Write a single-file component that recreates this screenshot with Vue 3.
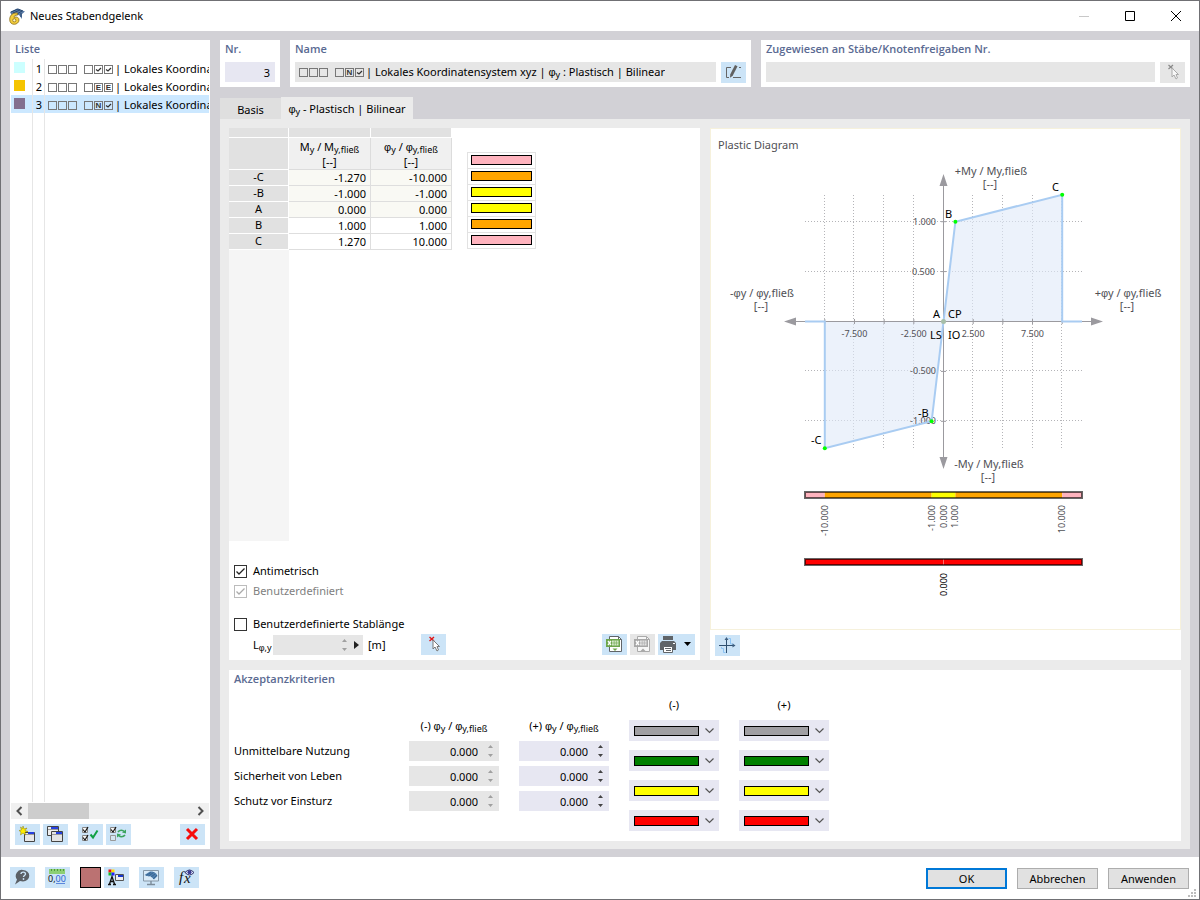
<script setup>
import { ref } from 'vue'

const hinges = [
  { no: 1, color: '#ccffff', marks: ['check', 'check'] },
  { no: 2, color: '#f5c400', marks: ['E', 'E'] },
  { no: 3, color: '#836f8f', marks: ['N', 'check'] },
]
const selected = ref(3)

const points = [
  { name: '-C', m: '-1.270', phi: '-10.000', locked: true },
  { name: '-B', m: '-1.000', phi: '-1.000', locked: true },
  { name: 'A', m: '0.000', phi: '0.000', locked: true },
  { name: 'B', m: '1.000', phi: '1.000', locked: false },
  { name: 'C', m: '1.270', phi: '10.000', locked: false },
]
const zoneColors = ['#ffb3be', '#ffa500', '#ffff00', '#ffff00', '#ffa500', '#ffb3be']

const criteria = ['Unmittelbare Nutzung', 'Sicherheit von Leben', 'Schutz vor Einsturz']
const levels = ['#a09fa3', '#008000', '#ffff00', '#ff0000']

const antimetric = ref(true)
const customLength = ref(false)

const px = (v) => 233.5 + v * 11.87
const py = (v) => 193.5 - v * 99.8
const gridX = [-10, -7.5, -5, -2.5, 2.5, 5, 7.5, 10]
const gridY = [1, 0.5, -0.5, -1]
const poly = (list) => list.map(([x, y]) => `${px(x)},${py(y)}`).join(' ')
const upper = poly([[0, 0], [1, 1], [10, 1.27], [10, 0]])
const lower = poly([[0, 0], [-1, -1], [-10, -1.27], [-10, 0]])
const nodes = [[1, 1], [10, 1.27], [-1, -1], [-10, -1.27]]
const rangeTicks = [
  { v: -10, t: '-10.000' },
  { v: -1, t: '-1.000' },
  { v: 0, t: '0.000' },
  { v: 1, t: '1.000' },
  { v: 10, t: '10.000' },
]
const zones = [
  { from: 95, to: px(-10), color: '#ffb3be' },
  { from: px(-10), to: px(-1), color: '#ffa500' },
  { from: px(-1), to: px(1), color: '#ffff00' },
  { from: px(1), to: px(10), color: '#ffa500' },
  { from: px(10), to: 372, color: '#ffb3be' },
]
</script>

<template>
  <div class="window">
    <header class="titlebar">
      <svg class="app-icon" width="16" height="17" viewBox="0 0 16 17" aria-hidden="true">
        <path d="M1 4 8 .5l8 3-3 2.500v5l-3-4-7 1z" fill="#5b7ba6" />
        <path d="M2 4 9 1l5 2M4 5l7-3M8 6l5-3M12 5v4" stroke="#27476f" fill="none" />
        <path d="M8.500 5C3 4.500.7 8 .7 11.500S3 16.300 5.300 16.300 10 14.500 10 12 8 8.300 5 9.300C5.300 7.500 6.500 6.800 8.500 7z" fill="#f3cd3c" stroke="#8c6f1d" stroke-width=".8" />
        <circle cx="5.300" cy="12.300" r="1.600" fill="#fff6c4" stroke="#8c6f1d" stroke-width=".8" />
      </svg>
      <h1>Neues Stabendgelenk</h1>
      <div class="win-buttons">
        <button type="button" disabled aria-label="Minimieren"><svg width="12" height="12"><path d="M1 6.500h10" stroke="#c8c8c8" /></svg></button>
        <button type="button" aria-label="Maximieren"><svg width="12" height="12"><path d="M1.500 1.500h9v9h-9z" stroke="#000" fill="none" /></svg></button>
        <button type="button" aria-label="Schließen"><svg width="12" height="12"><path d="M1 1l10 10M11 1 1 11" stroke="#000" fill="none" /></svg></button>
      </div>
    </header>

    <main class="body">
      <aside class="panel list-panel">
        <h2>Liste</h2>
        <ul class="list">
          <li v-for="h in hinges" :key="h.no" :class="{ active: h.no === selected }" @click="selected = h.no">
            <i class="chip" :style="{ background: h.color }"></i>
            <span class="no">{{ h.no }}</span>
            <span class="label">
              <span class="boxes"><i></i><i></i><i></i></span>
              <span class="boxes second"><i></i>
                <i v-for="(m, k) in h.marks" :key="k" class="mark">
                  <svg v-if="m === 'check'" width="7" height="7" viewBox="0 0 7 7"><path d="M1 3.500 3 5l3-3" fill="none" stroke="#333" stroke-width="1.300" /></svg>
                  <template v-else>{{ m }}</template>
                </i>
              </span>
              <span class="desc">| Lokales Koordinatensystem xyz</span>
            </span>
          </li>
          <li class="rest" aria-hidden="true"></li>
        </ul>
        <div class="hscroll">
          <button type="button" aria-label="Nach links"><svg width="17" height="16"><path d="M10.500 4 6.500 8l4 4" fill="none" stroke="#505050" stroke-width="2" /></svg></button>
          <div class="track"><div class="thumb"></div></div>
          <button type="button" aria-label="Nach rechts"><svg width="17" height="16"><path d="M6.500 4l4 4-4 4" fill="none" stroke="#505050" stroke-width="2" /></svg></button>
        </div>
        <div class="list-tools">
          <button type="button" class="tool" aria-label="Neu">
            <svg width="25" height="21" viewBox="0 0 25 21">
              <path d="M9.500 8.500h10v9h-10z" fill="#e8e8e8" stroke="#444" /><path d="M13 8h6v2h-6z" fill="#2540e0" /><path d="M10 10.500h9" stroke="#999" />
              <path d="M8 2l1 3 3-1-2 2.500 3 1-3 .5.500 3-2.500-2-2.500 2 .5-3-2-1.500 2.500-.5-1-3 2 1.500z" fill="#ffee00" stroke="#8a7a00" stroke-width=".5" />
            </svg>
          </button>
          <button type="button" class="tool" aria-label="Kopieren">
            <svg width="25" height="21" viewBox="0 0 25 21">
              <path d="M4.500 2.500h11v9h-11z" fill="#eee" stroke="#444" /><path d="M8 3h7v2H8z" fill="#2540e0" /><path d="M5 5.500h10" stroke="#999" />
              <path d="M8.500 7.500h11v10h-11z" fill="#e4e4e4" stroke="#444" /><path d="M13 8h6v2h-6z" fill="#2540e0" /><path d="M9 10.500h10" stroke="#999" />
            </svg>
          </button>
          <button type="button" class="tool gap" aria-label="Alle auswählen">
            <svg width="25" height="21" viewBox="0 0 25 21">
              <path d="M4.500 3.500h5v5h-5zM4.500 11.500h5v5h-5z" fill="#f5f5f5" stroke="#888" />
              <path d="M5 5.500 7 8l3-5M5 13.500 7 16l3-5" fill="none" stroke="#111" stroke-width="1.200" />
              <path d="M12.500 10.500 15 13.500 19.500 6.500" fill="none" stroke="#11a044" stroke-width="2" />
            </svg>
          </button>
          <button type="button" class="tool" aria-label="Auswahl umkehren">
            <svg width="25" height="21" viewBox="0 0 25 21">
              <path d="M4.500 3.500h5v5h-5z" fill="#f5f5f5" stroke="#888" /><path d="M4.500 11.500h5v5h-5z" fill="#d5e5f2" stroke="#999" />
              <path d="M5 5.500 7 8l3-5" fill="none" stroke="#111" stroke-width="1.200" />
              <path d="M12 8c2-2.500 5-2 6-.5M19 11c-2 2.500-5 2-6 .5" fill="none" stroke="#3ba45e" stroke-width="1.700" /><path d="M20 5.500v4l-4-1zM11 13.500v-4l4 1z" fill="#3ba45e" />
            </svg>
          </button>
          <button type="button" class="tool push" aria-label="Löschen">
            <svg width="25" height="21" viewBox="0 0 25 21"><path d="M7 5l10 10M17 5l-10 10" stroke="#f60c0c" stroke-width="3" /></svg>
          </button>
        </div>
      </aside>

      <section class="main">
        <div class="top-row">
          <div class="panel field-panel">
            <h2><label for="no">Nr.</label></h2>
            <div class="line"><input id="no" class="field num" value="3" /></div>
          </div>
          <div class="panel field-panel">
            <h2>Name</h2>
            <div class="line">
              <div class="field readonly" role="textbox" aria-readonly="true" aria-label="Name">
                <span class="boxes"><i></i><i></i><i></i></span>
                <span class="boxes second"><i></i><i class="mark">N</i><i class="mark"><svg width="7" height="7" viewBox="0 0 7 7"><path d="M1 3.500 3 5l3-3" fill="none" stroke="#333" stroke-width="1.300" /></svg></i></span>
                <span class="desc">| Lokales Koordinatensystem xyz | <span class="phi">φ</span><sub>y</sub> : Plastisch | Bilinear</span>
              </div>
              <button type="button" class="tool" aria-label="Name bearbeiten">
                <svg width="25" height="21" viewBox="0 0 25 21">
                  <path d="M10 5.500H5.500v10H8M12 15.500h8M18 5.500h2" fill="none" stroke="#666" />
                  <path d="M14 3l2.500 1.200-4.800 9.500-2.700 2 .3-3.400z" fill="#606060" />
                </svg>
              </button>
            </div>
          </div>
          <div class="panel field-panel">
            <h2><label for="assigned">Zugewiesen an Stäbe/Knotenfreigaben Nr.</label></h2>
            <div class="line">
              <input id="assigned" class="field disabled" readonly />
              <button type="button" class="tool off" disabled aria-label="Stäbe auswählen">
                <svg width="25" height="21" viewBox="0 0 25 21">
                  <path d="M8.500 3l4.500 4M13 3 8.500 7" stroke="#888" stroke-width="1.200" />
                  <path d="M12 6v9l2-2 2 4 1.500-1-1.500-3.500h2.500z" fill="#f8f8f8" stroke="#aaa" />
                </svg>
              </button>
            </div>
          </div>
        </div>

        <nav class="tabs">
          <button type="button" class="tab">Basis</button>
          <button type="button" class="tab current"><span class="phi">φ</span><sub>y</sub> - Plastisch | Bilinear</button>
        </nav>

        <div class="content">
          <div class="cards">
            <div class="card data-card">
              <div class="tables">
                <table>
                  <thead>
                    <tr class="band"><td></td><td></td><td></td></tr>
                    <tr>
                      <td class="corner"></td>
                      <th scope="col">M<sub>y</sub> / M<sub>y,fließ</sub><br />[--]</th>
                      <th scope="col"><span class="phi">φ</span><sub>y</sub> / <span class="phi">φ</span><sub>y,fließ</sub><br />[--]</th>
                    </tr>
                  </thead>
                  <tbody>
                    <tr v-for="p in points" :key="p.name" :class="{ locked: p.locked }">
                      <th scope="row">{{ p.name }}</th>
                      <td>{{ p.m }}</td>
                      <td>{{ p.phi }}</td>
                    </tr>
                  </tbody>
                </table>
                <ul class="zones">
                  <li v-for="(c, k) in zoneColors" :key="k"><i :style="{ background: c }"></i></li>
                </ul>
              </div>
              <div class="options">
                <label class="check"><input v-model="antimetric" type="checkbox" />Antimetrisch</label>
                <label class="check dim"><input type="checkbox" checked disabled />Benutzerdefiniert</label>
                <label class="check spaced"><input v-model="customLength" type="checkbox" />Benutzerdefinierte Stablänge</label>
                <div class="length-row">
                  <label for="len">L<sub><span class="phi">φ</span>,y</sub></label>
                  <div class="spin disabled length">
                    <input id="len" disabled />
                    <svg class="arrows" width="5" height="12" viewBox="0 0 5 12"><path d="M0 3h5L2.500 0zM0 9h5l-2.500 3z" fill="#a0a0a0" /></svg>
                    <svg class="more" width="5" height="8" viewBox="0 0 5 8"><path d="M0 0l5 4-5 4z" fill="#222" /></svg>
                  </div>
                  <span class="unit">[m]</span>
                  <button type="button" class="tool pick" aria-label="Stab auswählen">
                    <svg width="25" height="21" viewBox="0 0 25 21">
                      <path d="M8.500 3l4.500 4M13 3 8.500 7" stroke="#e01818" stroke-width="1.400" />
                      <path d="M12 6v9l2-2 2 4 1.500-1-1.500-3.500h2.500z" fill="#fff" stroke="#777" />
                    </svg>
                  </button>
                  <button type="button" class="tool first-right" aria-label="Excel-Export">
                    <svg width="25" height="21" viewBox="0 0 25 21">
                      <path d="M7.500 2.500h9l3 3v12h-12z" fill="#fff" stroke="#606468" /><path d="M16.500 2.500v3h3" fill="none" stroke="#606468" />
                      <path d="M4 5h14v8H4z" fill="#6da64c" /><path d="M6 7l3 4M9 7l-3 4" stroke="#fff" stroke-width="1.300" />
                      <path d="M10 6.500h6.500v5H10z" fill="#d5e8ca" /><path d="M10 9h6.500M12.200 6.500v5M14.400 6.500v5" stroke="#6da64c" stroke-width=".6" />
                      <path d="M10.500 14.500h5L13 17z" fill="#6da64c" />
                    </svg>
                  </button>
                  <button type="button" class="tool off" disabled aria-label="Excel-Import">
                    <svg width="25" height="21" viewBox="0 0 25 21">
                      <path d="M7.500 2.500h9l3 3v12h-12z" fill="#f7f7f7" stroke="#aaa" /><path d="M16.500 2.500v3h3" fill="none" stroke="#aaa" />
                      <path d="M4 5h14v8H4z" fill="#a8a8a8" /><path d="M6 7l3 4M9 7l-3 4" stroke="#fff" stroke-width="1.300" />
                      <path d="M10 6.500h6.500v5H10z" fill="#e2e2e2" /><path d="M10 9h6.500M12.200 6.500v5M14.400 6.500v5" stroke="#a8a8a8" stroke-width=".6" />
                      <path d="M10.500 17h5L13 14.500z" fill="#a8a8a8" />
                    </svg>
                  </button>
                  <button type="button" class="tool wide" aria-label="Drucken">
                    <svg width="37" height="21" viewBox="0 0 37 21">
                      <path d="M5 2h10v4H5zM2 9l2-2h12l2 2v7H2z" fill="#606468" /><path d="M15 9h2v1h-2z" fill="#fff" />
                      <path d="M5.500 12.500h9v6h-9z" fill="#fff" stroke="#606468" /><path d="M7 14.500h6M8 16.500h5" stroke="#606468" />
                      <path d="M26 8h7l-3.500 4z" fill="#000" />
                    </svg>
                  </button>
                </div>
              </div>
            </div>

            <div class="card plot-card">
              <svg class="plot" viewBox="0 0 471 502" role="img" aria-label="Plastic Diagram">
                <text x="8" y="21" class="axis-title">Plastic Diagram</text>
                <g class="grid">
                  <path v-for="x in gridX" :key="'x' + x" :d="`M${Math.round(px(x)) - 0.5} 67V320`" />
                  <path v-for="y in gridY" :key="'y' + y" :d="`M95 ${Math.round(py(y)) - 0.5}H372`" />
                </g>
                <polygon :points="upper" class="area" />
                <polygon :points="lower" class="area" />
                <g class="ticks">
                  <text x="226" :y="py(1) + 3" text-anchor="end">1.000</text>
                  <text x="225" :y="py(0.5) + 3" text-anchor="end">0.500</text>
                  <text x="226" :y="py(-0.5) + 3" text-anchor="end">-0.500</text>
                  <text x="226" :y="py(-1) + 3" text-anchor="end">-1.000</text>
                  <text :x="px(-7.5)" y="209" text-anchor="middle">-7.500</text>
                  <text :x="px(-2.5)" y="209" text-anchor="middle">-2.500</text>
                  <text :x="px(2.5)" y="209" text-anchor="middle">2.500</text>
                  <text :x="px(7.5)" y="209" text-anchor="middle">7.500</text>
                </g>
                <g class="axes">
                  <path d="M84 193.500H384M233.500 56V331" />
                  <path v-for="x in gridX" :key="'t' + x" :d="`M${px(x)} 191V196`" />
                  <path v-for="y in gridY" :key="'u' + y" :d="`M231 ${py(y)}H236`" />
                </g>
                <path class="heads" d="M74 193.500l12-4v8zM393 193.500l-12-4v8zM233.500 46l-4 12h8zM233.500 341l-4-12h8z" />
                <path class="curve" :d="`M95 ${py(0)}H${px(-10)}V${py(-1.27)}L${px(-1)} ${py(-1)}L${px(1)} ${py(1)}L${px(10)} ${py(1.27)}V${py(0)}H372`" />
                <circle v-for="(n, k) in nodes" :key="k" :cx="px(n[0])" :cy="py(n[1])" r="2" fill="#0f0" />
                <circle cx="233.500" cy="193.500" r="2.500" fill="#a7bfa9" />
                <g class="axis-title" text-anchor="middle">
                  <text x="281" y="47">+My / My,fließ</text><text x="280" y="60">[--]</text>
                  <text x="279" y="340">-My / My,fließ</text><text x="278" y="353">[--]</text>
                  <text x="52" y="169">-<tspan class="phi">φ</tspan>y / <tspan class="phi">φ</tspan>y,fließ</text><text x="51" y="182">[--]</text>
                  <text x="418" y="169">+<tspan class="phi">φ</tspan>y / <tspan class="phi">φ</tspan>y,fließ</text><text x="417" y="182">[--]</text>
                </g>
                <g class="names">
                  <text x="235" y="90">B</text><text x="342" y="63">C</text>
                  <text x="223" y="190">A</text><text x="238" y="190">CP</text>
                  <text x="220" y="211">LS</text><text x="238" y="211">IO</text>
                  <text x="208" y="289">-B</text><text x="101" y="316">-C</text>
                </g>
                <rect v-for="z in zones" :key="z.from" :x="z.from" y="364" :width="z.to - z.from" height="6" :fill="z.color" />
                <rect x="95" y="364" width="277" height="6" class="frame" />
                <g class="ticks" text-anchor="end">
                  <text v-for="r in rangeTicks" :key="r.t" :transform="`translate(${px(r.v) + 3} 377) rotate(-90)`">{{ r.t }}</text>
                </g>
                <rect x="95" y="431" width="277" height="6" fill="#f00" />
                <path d="M233.500 431v6" stroke="#ff6a6a" />
                <rect x="95" y="431" width="277" height="6" class="frame" />
                <text class="ticks strong" text-anchor="end" transform="translate(237 445) rotate(-90)">0.000</text>
              </svg>
              <div class="plot-tools">
                <button type="button" class="tool" aria-label="Diagrammansicht">
                  <svg width="25" height="21" viewBox="0 0 25 21">
                    <path d="M6.500 12v1.500h2v4h2M13.500 3.500h2v5.500h3" fill="none" stroke="#8cc4f4" />
                    <path d="M4 10.500h16M11.500 3v15" stroke="#2f5070" /><path d="M20.500 10.500l-3-2v4zM11.500 2l-2 3h4z" fill="#3f5f80" />
                  </svg>
                </button>
              </div>
            </div>
          </div>

          <div class="card accept">
            <h2>Akzeptanzkriterien</h2>
            <div class="accept-body">
              <div class="limits">
                <span></span>
                <span class="col">(-) <span class="phi">φ</span><sub>y</sub> / <span class="phi">φ</span><sub>y,fließ</sub></span>
                <span class="col">(+) <span class="phi">φ</span><sub>y</sub> / <span class="phi">φ</span><sub>y,fließ</sub></span>
                <template v-for="(c, k) in criteria" :key="c">
                  <label :for="'neg' + k">{{ c }}</label>
                  <div class="spin disabled">
                    <input :id="'neg' + k" value="0.000" disabled />
                    <svg class="arrows" width="5" height="12" viewBox="0 0 5 12"><path d="M0 3h5L2.500 0zM0 9h5l-2.500 3z" fill="#a0a0a0" /></svg>
                  </div>
                  <div class="spin">
                    <input :id="'pos' + k" value="0.000" :aria-label="c + ' (+)'" />
                    <svg class="arrows" width="5" height="12" viewBox="0 0 5 12"><path d="M0 3h5L2.500 0zM0 9h5l-2.500 3z" fill="#444" /></svg>
                  </div>
                </template>
              </div>
              <div class="colors">
                <span class="col">(-)</span>
                <span class="col">(+)</span>
                <template v-for="(c, k) in levels" :key="c">
                  <div v-for="s in ['-', '+']" :key="s" class="combo">
                    <select :aria-label="`Farbe ${k + 1} (${s})`"><option :value="c"></option></select>
                    <i :style="{ background: c }"></i>
                    <svg width="9" height="6" viewBox="0 0 9 6"><path d="M.5.5l4 4 4-4" fill="none" stroke="#555" stroke-width="1.200" /></svg>
                  </div>
                </template>
              </div>
            </div>
          </div>
        </div>
      </section>
    </main>

    <footer class="footer">
      <button type="button" class="tool" aria-label="Hilfe">
        <svg width="25" height="21" viewBox="0 0 25 21">
          <path d="M13 3a6 5.500 0 0 1 0 11.500c-1 0-2-.2-3-.5l-5 3.500 2-5A6 6 0 0 1 13 3z" fill="#5b6066" />
          <path d="M11 7c0-2.500 4.500-2.500 4.500 0 0 1.500-2 1.500-2 3" fill="none" stroke="#cce4f7" stroke-width="1.400" /><circle cx="13.500" cy="12" r=".9" fill="#cce4f7" />
        </svg>
      </button>
      <button type="button" class="tool g10" aria-label="Einheiten">
        <svg width="25" height="21" viewBox="0 0 25 21">
          <path d="M4 2h16v5H4z" fill="#8ccf74" /><path d="M6.500 2v2M9.500 2v2M12.500 2v2M15.500 2v2M18.500 2v2" stroke="#4f9b3a" />
          <text x="3" y="15" font-size="9" fill="#111">0,</text><text x="10.500" y="15" font-size="9" fill="#2b62d0">00</text><path d="M11 16.500h9" stroke="#5b87dd" />
        </svg>
      </button>
      <button type="button" class="color-button g10" aria-label="Farbe"></button>
      <button type="button" class="tool g3" aria-label="Darstellung">
        <svg width="25" height="21" viewBox="0 0 25 21">
          <path d="M4.500 2.500h3v3h-3z" fill="#e11" /><path d="M7.500 2.500h3v3h-3z" fill="#fd0" /><path d="M4.500 5.500h3v3h-3z" fill="#1b2" /><path d="M7.500 5.500h3v3h-3z" fill="#22f" />
          <path d="M4 17.500h3M9 17.500h3M5.500 17 8 9.500l2.500 7.500M6.500 14.500h3" fill="none" stroke="#111" stroke-width="1.300" />
          <path d="M11.500 7.500h8v6h-8z" fill="#eee" stroke="#555" /><path d="M14 8h5v2h-5z" fill="#1638d0" />
        </svg>
      </button>
      <button type="button" class="tool g10" aria-label="Ansicht">
        <svg width="25" height="21" viewBox="0 0 25 21">
          <path d="M4.500 3.500h15v10.500h-15z" fill="#d9eaf7" stroke="#8496a6" /><path d="M12 14v3M8 17.500h8" stroke="#7c8c9a" stroke-width="1.400" />
          <path d="M5.500 8 11 4.500c4-.5 7 2 7.500 4.500L15 12.500 12 9.500 8 9z" fill="#4f7fae" /><path d="M7 8.500l5-3M9.500 9l5-3.500M12 10l4-3M14 12l4-4" stroke="#27527e" stroke-width=".6" />
        </svg>
      </button>
      <button type="button" class="tool g10" aria-label="Formel">
        <svg width="25" height="21" viewBox="0 0 25 21">
          <text x="5" y="15" class="formula">f</text>
          <text x="10" y="16" class="formula">x</text>
          <path d="M11 5.500q4.500-5 9 0-4.500 5-9 0z" fill="#dfe6ff" stroke="#2c2f66" /><circle cx="15.500" cy="5.300" r="2" fill="#3a3a90" />
        </svg>
      </button>
      <div class="actions">
        <button type="button" class="action primary">OK</button>
        <button type="button" class="action">Abbrechen</button>
        <button type="button" class="action">Anwenden</button>
      </div>
      <svg class="grip" width="9" height="9" viewBox="0 0 9 9" aria-hidden="true"><path d="M6 0h2v2H6zM3 3h2v2H3zM6 3h2v2H6zM0 6h2v2H0zM3 6h2v2H3zM6 6h2v2H6z" fill="#bdbdbd" /></svg>
    </footer>
  </div>
</template>

<style>
body { margin: 0; background: #fff; }
</style>

<style scoped>
* { box-sizing: border-box; }
.window {
  display: flex; flex-direction: column; min-height: 100vh; border: 1px solid #707074;
  background: #fff; color: #000; font: 11px/16px "Noto Sans", "Open Sans", sans-serif;
}
button, input, select { font: inherit; color: inherit; border: 0; padding: 0; margin: 0; border-radius: 0; }
button { background: none; }
svg { display: block; }
ul { list-style: none; margin: 0; padding: 0; }
sub { font-size: 9px; line-height: 0; vertical-align: -2px; }
h1 { margin: 0; font-size: 11px; font-weight: 400; }
h2 { margin: 0; padding: 0 5px 2px; font: 600 11px/17px "Open Sans", "Noto Sans", sans-serif; color: #5a6a92; }
i { font-style: normal; }
.phi, .plot .phi { font-family: "Liberation Sans", sans-serif; line-height: 0; }

.titlebar { display: flex; align-items: center; height: 30px; padding-left: 8px; gap: 5px; }
.win-buttons { display: flex; margin-left: auto; }
.win-buttons button { width: 46px; height: 28px; display: flex; align-items: center; justify-content: center; }

.body { flex: 1; display: flex; gap: 10px; padding: 9px 9px 8px; background: #d2d1d6; }
.panel { background: #fff; }
.list-panel { width: 200px; flex: none; display: flex; flex-direction: column; }
.list { flex: 1; display: flex; flex-direction: column; margin: 0 1px; overflow: hidden; }
.list li { display: flex; height: 18px; line-height: 20px; align-items: stretch; white-space: nowrap; flex: none; }
.list li.rest { flex: 1; background: linear-gradient(#e6e6e6, #e6e6e6) 21px 0 / 1px 100% no-repeat, linear-gradient(#e6e6e6, #e6e6e6) 33px 0 / 1px 100% no-repeat; }
.list li.active { background: #cce8ff; }
.chip { width: 11px; height: 11px; margin: 3px 7px 0 3px; flex: none; }
.no { width: 13px; padding-right: 2px; text-align: right; border: solid #e6e6e6; border-width: 0 1px; flex: none; }
.label { display: flex; flex: 1; min-width: 0; align-items: center; padding: 2px 0 0 3px; }
.boxes { display: flex; gap: 1px; flex: none; }
.boxes.second { margin-left: 7px; }
.boxes i { width: 9px; height: 9px; border: 1px solid #777; display: flex; align-items: center; justify-content: center; font: 700 8px/7px "Liberation Sans", sans-serif; color: #333; }
.desc { min-width: 0; margin-left: 2px; white-space: nowrap; overflow: hidden; }

.hscroll { display: flex; height: 16px; margin: 1px 1px 5px; background: #f0f0f0; }
.hscroll button { width: 17px; height: 16px; }
.track { flex: 1; }
.thumb { width: 37%; height: 16px; background: #cdcdcd; }
.list-tools { display: flex; gap: 3px; padding: 0 5px 4px; }
.tool { width: 25px; height: 21px; background: #cce4f7; flex: none; }
.tool.off { background: #e6e6e6; }
.tool.wide { width: 37px; }
.tool.gap { margin-left: 7px; }
.push { margin-left: auto; }

.main { flex: 1; min-width: 0; display: flex; flex-direction: column; }
.top-row { display: grid; grid-template-columns: 60px minmax(0, 461fr) minmax(0, 429fr); gap: 10px; margin-bottom: 10px; }
.field-panel { height: 47px; }
.line { display: flex; gap: 5px; padding: 3px 5px 0; }
.field { flex: 1; min-width: 0; height: 20px; background: #e7e7f2; }
.field.num { text-align: right; padding-right: 5px; }
.field.disabled { background: #e6e6e6; }
.field.readonly { display: flex; align-items: center; padding-left: 4px; background: #e6e6e6; overflow: hidden; }

.tabs { display: flex; align-items: flex-end; height: 22px; }
.tab { height: 21px; width: 61px; background: #dfdfdf; padding-top: 2px; }
.tab.current { height: 22px; width: 132px; background: #ebebeb; padding-top: 2px; }
.content { flex: 1; display: flex; flex-direction: column; gap: 10px; padding: 9px 9px 8px; background: #ebebeb; }
.cards { flex: 1; display: grid; grid-template-columns: minmax(0, 1fr) minmax(0, 1fr); gap: 10px; }
.card { background: #fff; display: flex; flex-direction: column; }

.tables { flex: 1; display: flex; align-items: flex-start; background: linear-gradient(90deg, #f5f5f5 60px, transparent 60px); }
table { width: 223px; border-collapse: separate; border-spacing: 0; table-layout: fixed; background: #fff; }
.band td { height: 10px; border-bottom: 1px solid #fff; border-right: 1px solid #fff; background: #e1e1e1; padding: 0; }
thead td, thead th { padding: 0; }
.corner { background: #e1e1e1; border: solid #fff; border-width: 0 1px 1px 0; width: 60px; }
thead th { height: 32px; font-weight: 400; line-height: 15px; background: #f0f0f0; border: solid #dcdcdc; border-width: 0 1px 1px 0; }
tbody th { width: 60px; height: 16px; padding: 0 0 1px; line-height: 14px; font-weight: 400; background: #e1e1e1; border: solid #fff; border-width: 0 1px 1px 0; }
tbody td { height: 16px; padding: 0 4px; line-height: 15px; text-align: right; border: solid #dedede; border-width: 0 1px 1px 0; }
tbody tr.locked td { background: #f9f9f4; }
.band td:first-child { width: 60px; }
.band td:nth-child(2) { width: 82px; }
.zones { width: 69px; margin: 24px 0 0 15px; border: solid #e2e2e2; border-width: 1px 1px 0; }
.zones li { height: 16px; padding: 2px 3px; border-bottom: 1px solid #e2e2e2; }
.zones i { display: block; height: 10px; border: 1px solid #000; }

.options { display: flex; flex-direction: column; padding: 20px 5px 5px; }
.check { display: flex; align-items: center; gap: 6px; height: 20px; align-self: flex-start; }
.check.dim { color: #808080; }
.check.spaced { margin-top: 13px; }
.check input { appearance: none; width: 13px; height: 13px; border: 1px solid #333; background: #fff center / 11px 11px no-repeat; }
.check input:checked { background-image: url("data:image/svg+xml,%3Csvg xmlns='http://www.w3.org/2000/svg' viewBox='0 0 11 11'%3E%3Cpath d='M1.500 5.500 4 8l5.500-5.500' fill='none' stroke='%23222' stroke-width='1.300'/%3E%3C/svg%3E"); }
.check input:disabled { border-color: #bcbcbc; opacity: 1; background-image: url("data:image/svg+xml,%3Csvg xmlns='http://www.w3.org/2000/svg' viewBox='0 0 11 11'%3E%3Cpath d='M1.500 5.500 4 8l5.500-5.500' fill='none' stroke='%23aaa' stroke-width='1.300'/%3E%3C/svg%3E"); }
.length-row { display: flex; align-items: center; gap: 3px; }
.length-row label { width: 36px; padding-left: 19px; }
.length-row .unit { margin-left: 2px; width: 50px; }
.first-right { margin-left: auto; }

.spin { display: flex; align-items: center; width: 90px; height: 20px; padding-right: 6px; gap: 10px; background: #e7e7f2; }
.spin.disabled { background: #e6e6e6; }
.spin input { flex: 1; min-width: 0; height: 20px; text-align: right; background: transparent; color: #000; }
.spin svg { flex: none; }
.length { padding-right: 4px; gap: 7px; }

.plot { flex: 1; width: 100%; min-height: 0; box-shadow: inset 0 0 0 1px #f6f1dc; }
.plot text { font-family: "Noto Sans", sans-serif; }
.axis-title { font-size: 11px; fill: #505055; }
.grid path { stroke: #b4b4b8; stroke-dasharray: 1 2; stroke-width: 1; fill: none; }
.area { fill: #dfeaf8; fill-opacity: .6; }
.ticks { font-size: 9px; fill: #505055; }
.ticks.strong { fill: #000; }
.axes path { stroke: #9b9a9f; fill: none; }
.heads { fill: #9b9a9f; }
.curve { fill: none; stroke: #a9ccf2; stroke-width: 2; }
.names { font-size: 11px; fill: #000; }
.frame { fill: none; stroke: #000; stroke-opacity: .6; stroke-width: 2; }
.plot-tools { height: 30px; padding: 5px; }

.accept-body { display: flex; gap: 20px; padding: 7px 5px 10px; align-items: flex-start; flex-wrap: wrap; }
.limits { display: grid; grid-template-columns: 155px 90px 90px; column-gap: 20px; row-gap: 5px; align-items: center; margin-top: 20px; }
.limits .col { height: 20px; line-height: 20px; }
.limits label { line-height: 20px; height: 20px; }
.col { text-align: center; }
.colors { display: grid; grid-template-columns: 90px 90px; column-gap: 20px; row-gap: 9px; }
.colors .col { height: 15px; line-height: 18px; }
.combo { position: relative; height: 21px; }
.combo select { appearance: none; display: block; width: 100%; height: 21px; background: #e7e7f2; }
.combo i { position: absolute; left: 5px; top: 6px; right: 20px; height: 10px; border: 1px solid #000; pointer-events: none; }
.combo svg { position: absolute; right: 5px; top: 8px; pointer-events: none; }

.footer { position: relative; display: flex; align-items: flex-start; height: 42px; padding: 10px 10px 0 9px; }
.g10 { margin-left: 10px; }
.g3 { margin-left: 3px; }
.color-button { width: 21px; height: 21px; background: #bb7272; border: 1px solid #000; }
.formula { font: italic 400 15px "Liberation Serif", serif; fill: #111; }
.actions { display: flex; gap: 10px; margin: 1px 0 0 auto; }
.action { width: 81px; height: 21px; background: #e1e1e1; border: 1px solid #adadad; }
.action.primary { border: 2px solid #0078d7; }
.grip { position: absolute; right: 2px; bottom: 1px; }
</style>
